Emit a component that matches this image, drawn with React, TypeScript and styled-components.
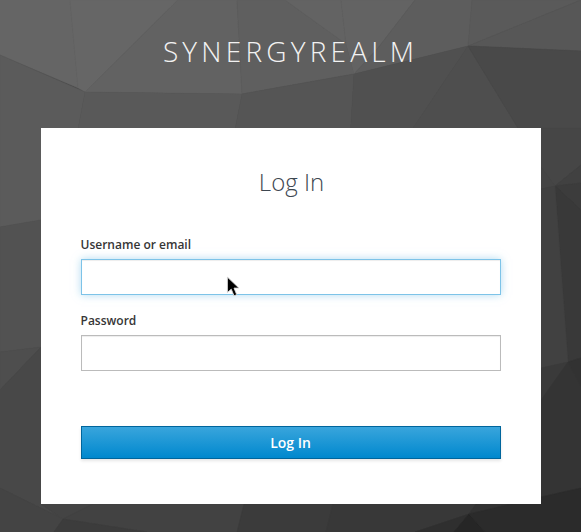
import React from "react";
import styled, { createGlobalStyle } from "styled-components";

const GlobalStyle = createGlobalStyle`
  html, body {
    margin: 0;
    padding: 0;
    height: 100%;
    background: #3f3f3f;
  }
  #root {
    height: 100%;
  }
`;

// low-poly facets of the page backdrop: points + fill
const facets: [string, string][] = [
  // top band
  ["0,0 70,0 78,88 0,55", "#656565"],
  ["70,0 178,0 85,92 78,88", "#666666"],
  ["178,0 237,0 242,94 85,92", "#626262"],
  ["237,0 285,0 346,44 354,74 242,94", "#5f5f5f"],
  ["285,0 341,0 346,44", "#636363"],
  ["341,0 415,0 378,48 354,74 346,44", "#636363"],
  ["415,0 472,0 468,46 354,74 378,48", "#5d5d5d"],
  ["472,0 581,0 468,46", "#5a5a5a"],
  ["581,0 581,51 468,46", "#575757"],
  // row above the card
  ["0,55 85,92 76,140 41,220 0,227", "#5b5b5b"],
  ["85,92 242,94 233,140 76,140", "#595959"],
  ["242,94 354,74 350,140 233,140", "#555555"],
  ["354,74 468,46 405,140 350,140", "#505050"],
  ["468,46 518,128 405,140", "#4e4e4e"],
  ["468,46 581,51 581,128 518,128", "#494949"],
  // right of the card
  ["518,128 581,128 581,165 555,186 541,167", "#464646"],
  ["581,165 581,183 555,186", "#414141"],
  ["555,186 581,183 581,210", "#3c3c3c"],
  ["555,186 581,210 581,358 568,362", "#393939"],
  ["541,167 555,186 541,189", "#454545"],
  ["555,186 568,362 541,368 541,189", "#414141"],
  ["541,368 568,362 541,400", "#3a3a3a"],
  ["568,362 581,358 581,387", "#323232"],
  ["568,362 581,387 581,488 541,497 541,400", "#343434"],
  // left of the card
  ["0,227 41,220 41,347 0,352", "#525252"],
  ["0,352 41,347 0,390", "#4e4e4e"],
  ["0,390 41,347 41,504 63,519 0,488", "#484848"],
  ["0,488 63,519 54,532 0,532", "#444444"],
  // below the card
  ["41,504 93,504 63,519", "#444444"],
  ["93,504 244,504 237,532 147,532 63,519", "#424242"],
  ["63,519 147,532 54,532", "#3c3c3c"],
  ["244,504 333,504 326,532 237,532", "#3b3b3b"],
  ["333,504 476,504 469,514 415,532 326,532", "#383838"],
  ["469,514 454,532 415,532", "#2f2f2f"],
  ["469,514 485,532 454,532", "#262626"],
  ["476,504 541,497 469,514", "#323232"],
  ["469,514 541,497 581,488 581,532 485,532", "#2b2b2b"],
];

const App: React.FC = () => {
  return (
    <Page>
      <GlobalStyle />
      <Backdrop viewBox="0 0 581 532" preserveAspectRatio="none" aria-hidden="true">
        {facets.map(([points, fill]) => (
          <polygon key={points} points={points} fill={fill} stroke={fill} strokeWidth="0.5" />
        ))}
      </Backdrop>
      <Brand>SYNERGYREALM</Brand>
      <Card>
        <Heading>Log In</Heading>
        <Form onSubmit={(e) => e.preventDefault()}>
          <Field>
            <Label htmlFor="username">Username or email</Label>
            <TextInput id="username" type="text" $focused />
          </Field>
          <Field>
            <Label htmlFor="password">Password</Label>
            <TextInput id="password" type="password" />
          </Field>
          <SubmitButton type="submit">Log In</SubmitButton>
        </Form>
        <Cursor width="16" height="22" viewBox="0 0 14 20" aria-hidden="true">
          <path d="M1 1 L1 15 L4.5 12 L7 18 L9.5 17 L7 11 L11.5 11 Z" fill="#000" stroke="#ddd" strokeWidth="0.8" />
        </Cursor>
      </Card>
    </Page>
  );
};

export default App;

// Styled components
const Page = styled.div`
  position: relative;
  display: flex;
  flex-direction: column;
  align-items: center;
  width: 581px;
  height: 532px;
  overflow: hidden;
  font-family: "Open Sans", "Liberation Sans", sans-serif;
`;

const Backdrop = styled.svg`
  position: absolute;
  inset: 0;
  width: 100%;
  height: 100%;
`;

const Brand = styled.div`
  position: relative;
  height: 128px;
  padding-top: 32px;
  box-sizing: border-box;
  font-size: 28px;
  line-height: 38px;
  letter-spacing: 4.2px;
  color: #f2f2f2;
  font-weight: 350;
`;

const Card = styled.div`
  position: relative;
  width: 500px;
  height: 376px;
  box-sizing: border-box;
  padding: 37px 40px 0;
  background: #fff;
`;

const Heading = styled.h1`
  margin: 0;
  padding-left: 2px;
  font-size: 24px;
  line-height: 34px;
  font-weight: 300;
  text-align: center;
  color: #3d4650;
`;

const Form = styled.form`
  display: flex;
  flex-direction: column;
  margin-top: 37px;
`;

const Field = styled.div`
  display: flex;
  flex-direction: column;
  margin-bottom: 17px;
`;

const Label = styled.label`
  font-size: 12px;
  line-height: 17px;
  font-weight: 600;
  color: #363636;
  margin-bottom: 6px;
`;

const TextInput = styled.input<{ $focused?: boolean }>`
  box-sizing: border-box;
  width: 420px;
  height: 36px;
  padding: 2px 6px;
  outline: none;
  background: #fff;
  border: 1px solid ${(p) => (p.$focused ? "#7dc3e8" : "#bbb")};
  box-shadow: ${(p) =>
    p.$focused
      ? "inset 0 1px 1px rgba(3, 3, 3, 0.075), 0 0 8px rgba(125, 195, 232, 0.6)"
      : "inset 0 1px 1px rgba(3, 3, 3, 0.075)"};
`;

const SubmitButton = styled.button`
  width: 420px;
  height: 33px;
  margin-top: 38px;
  padding: 0;
  border: 1px solid #00659c;
  background: linear-gradient(to bottom, #39a5dc 0%, #0088ce 100%);
  box-shadow: 0 2px 3px rgba(3, 3, 3, 0.1);
  color: #fff;
  font-family: inherit;
  font-size: 14px;
  font-weight: 550;
  cursor: pointer;
`;

const Cursor = styled.svg`
  position: absolute;
  left: 185px;
  top: 148px;
`;
